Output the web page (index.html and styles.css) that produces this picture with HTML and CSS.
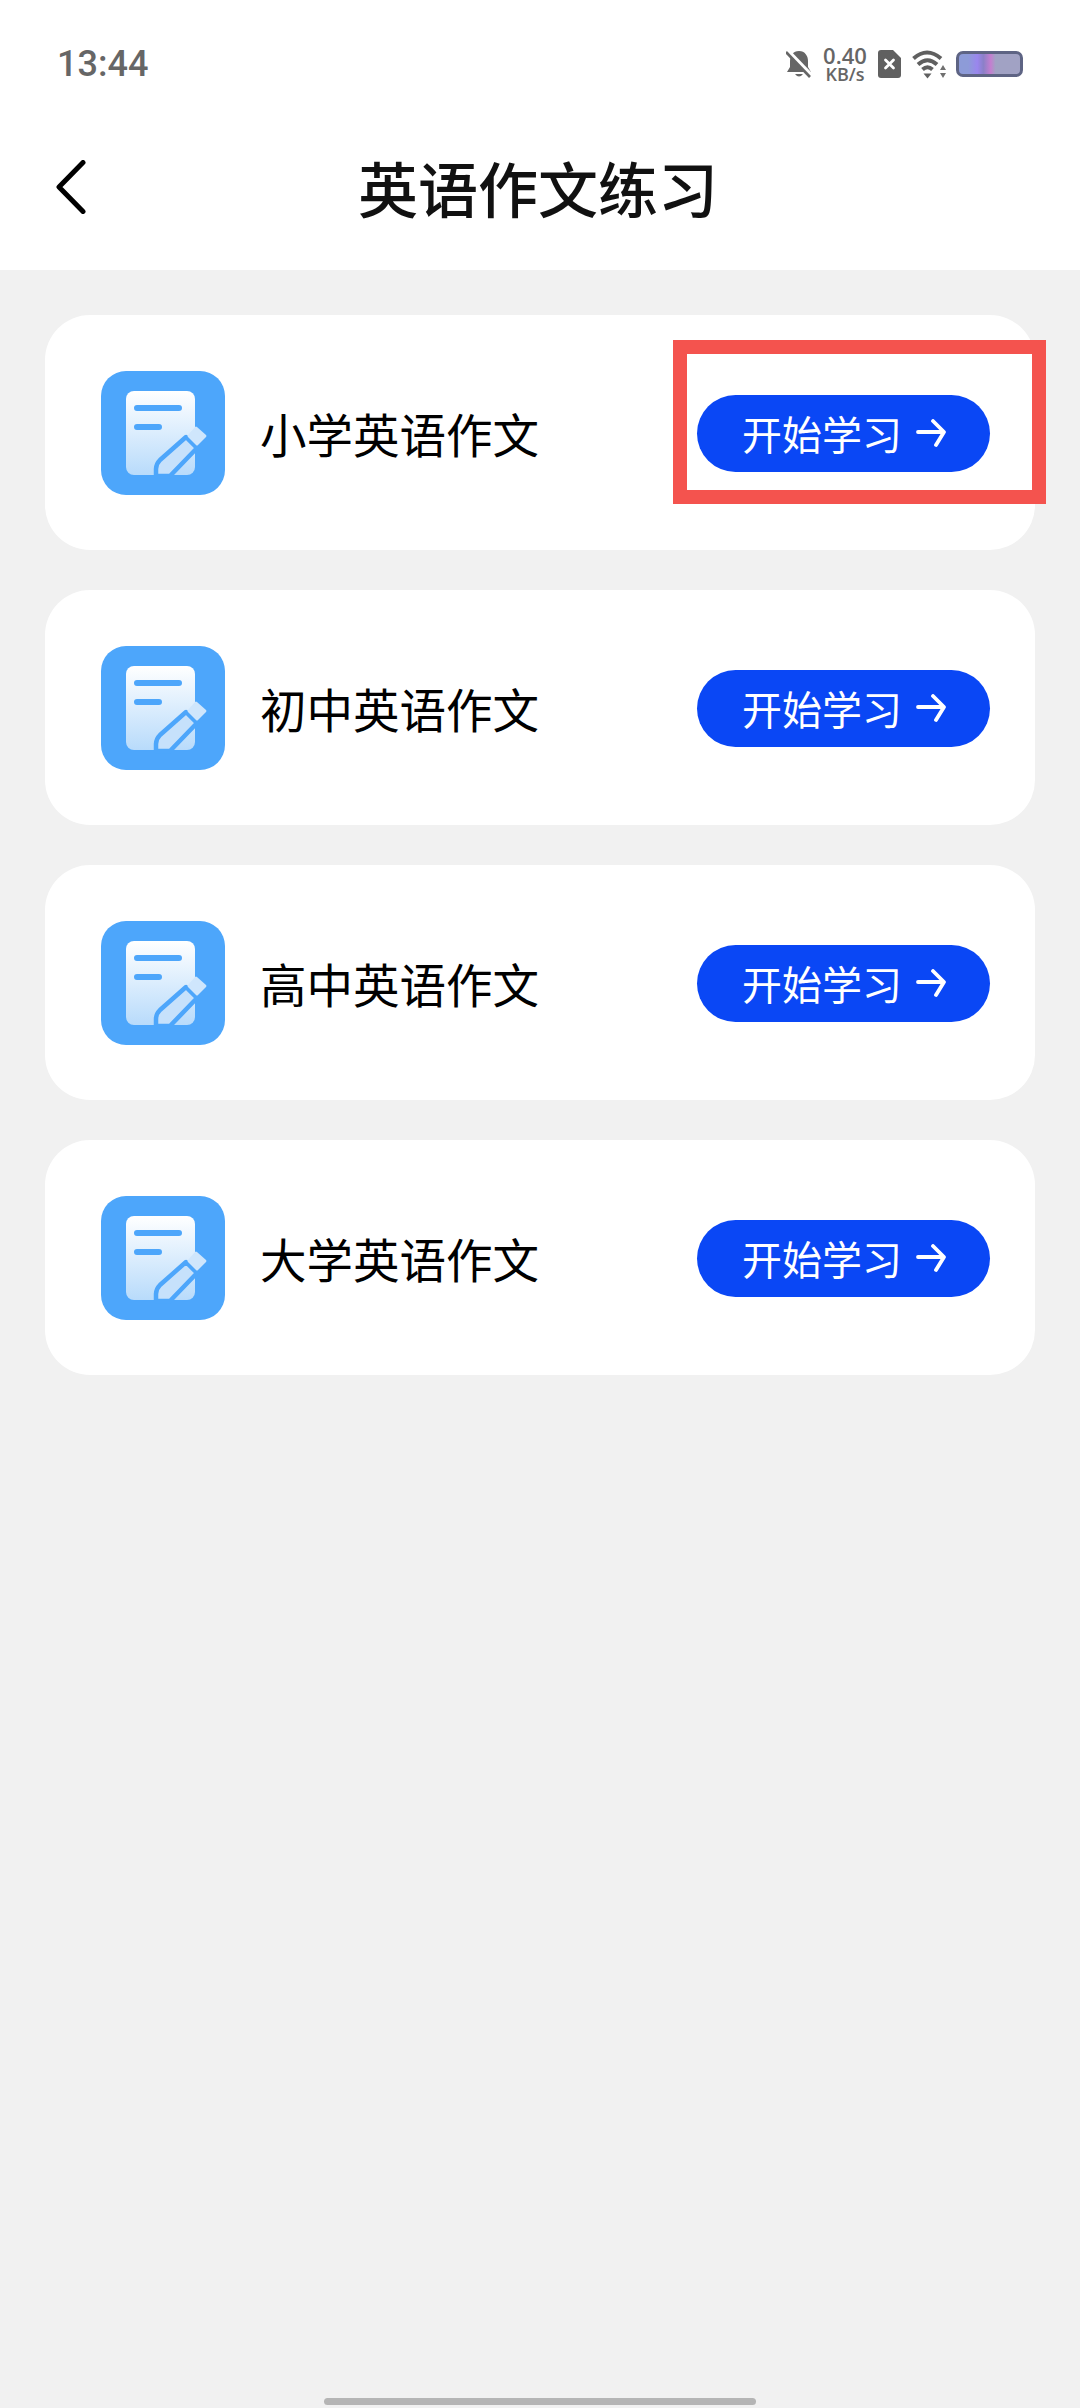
FILE: index.html
```html
<!DOCTYPE html>
<html lang="zh">
<head>
<meta charset="utf-8">
<title>英语作文练习</title>
<link rel="stylesheet" href="styles.css">
</head>
<body>
<svg class="defs" width="0" height="0" aria-hidden="true">
  <defs>
    <linearGradient id="docfill" x1="0" y1="0" x2="0" y2="1">
      <stop offset="0" stop-color="#ffffff"/>
      <stop offset="1" stop-color="#b8dbfb"/>
    </linearGradient>
    <symbol id="note" viewBox="0 0 124 124">
      <rect width="124" height="124" rx="25" fill="#4da6fb"/>
      <rect x="25" y="20" width="69" height="84" rx="8" fill="url(#docfill)"/>
      <path d="M36 37H78M36 56H58" stroke="#4da6fb" stroke-width="6" stroke-linecap="round" fill="none"/>
      <path d="M55 105V98Q55 93 59 89L85 66L96 77L69 105Z" fill="#c6e1fb" stroke="#4da6fb" stroke-width="4.500" stroke-linejoin="round"/>
      <path d="M96 56L105 64Q106 65 105 66L97 74Q96 75 95 74L87 66Q86 65 87 64L94 56Q95 55 96 56Z" fill="#cfe6fc"/>
    </symbol>
    <symbol id="go" viewBox="0 0 30 28">
      <path d="M2 13H27M17 2L28 13L20 26" fill="none" stroke="#fff" stroke-width="3.800" stroke-linecap="round" stroke-linejoin="round"/>
    </symbol>
  </defs>
</svg>

<div class="page">
  <header class="top">
    <div class="status">
      <span class="time">13:44</span>
      <div class="status-icons">
        <svg class="ic-bell" viewBox="0 0 26 28">
          <path d="M13 1C7 1 4 6 4 11V17L1 22H25L22 17V11C22 6 19 1 13 1ZM9 24Q13 29 17 24Z" fill="#666"/>
          <path d="M2 1L26 26" stroke="#fff" stroke-width="4"/>
          <path d="M0 2L24 27" stroke="#666" stroke-width="2.600"/>
        </svg>
        <div class="speed">0.40<br>KB/s</div>
        <svg class="ic-sim" viewBox="0 0 23 28">
          <path d="M3 0H15L23 8V25Q23 28 20 28H3Q0 28 0 25V3Q0 0 3 0Z" fill="#606060"/>
          <path d="M7.500 10L15.500 18M15.500 10L7.500 18" stroke="#fff" stroke-width="2.800" stroke-linecap="round"/>
        </svg>
        <svg class="ic-wifi" viewBox="0 0 35 30">
          <path d="M1.500 9.500Q15 -2.500 29 9.500M6 15.500Q15.500 7 25 15.500M10.500 20.500Q15.500 16 20.500 20.500" stroke="#606060" stroke-width="4" fill="none"/>
          <path d="M11.500 24.500H19.500L15.500 29.500Z" fill="#606060"/>
          <path d="M31 16L34 21H28ZM28 24H34L31 29Z" fill="#707070"/>
        </svg>
        <div class="battery"></div>
      </div>
    </div>
    <nav class="nav">
      <svg class="back" viewBox="0 0 30 54">
        <path d="M27 2.500L3 27L27 51.500" fill="none" stroke="#000" stroke-width="5" stroke-linecap="round" stroke-linejoin="round"/>
      </svg>
      <h1 class="title">英语作文练习</h1>
    </nav>
  </header>

  <main class="list">
    <section class="card">
      <svg class="card-icon"><use href="#note"/></svg>
      <span class="card-name">小学英语作文</span>
      <div class="btn-wrap">
        <button class="start"><span>开始学习</span><svg class="arrow"><use href="#go"/></svg></button>
        <div class="highlight"></div>
      </div>
    </section>
    <section class="card">
      <svg class="card-icon"><use href="#note"/></svg>
      <span class="card-name">初中英语作文</span>
      <div class="btn-wrap">
        <button class="start"><span>开始学习</span><svg class="arrow"><use href="#go"/></svg></button>
      </div>
    </section>
    <section class="card">
      <svg class="card-icon"><use href="#note"/></svg>
      <span class="card-name">高中英语作文</span>
      <div class="btn-wrap">
        <button class="start"><span>开始学习</span><svg class="arrow"><use href="#go"/></svg></button>
      </div>
    </section>
    <section class="card">
      <svg class="card-icon"><use href="#note"/></svg>
      <span class="card-name">大学英语作文</span>
      <div class="btn-wrap">
        <button class="start"><span>开始学习</span><svg class="arrow"><use href="#go"/></svg></button>
      </div>
    </section>
  </main>

  <div class="home-bar"></div>
</div>
</body>
</html>
```

FILE: styles.css
```css
* {
  box-sizing: border-box;
}

html,
body {
  margin: 0;
  padding: 0;
  background: #f1f1f1;
}

.defs {
  position: absolute;
}

.page {
  width: 1080px;
  height: 2408px;
  display: flex;
  flex-direction: column;
  font-family: "Noto Sans CJK SC", "Noto Sans", sans-serif;
  overflow: hidden;
}

.top {
  height: 270px;
  background: #fff;
  flex: none;
}

.status {
  height: 110px;
  padding: 18px 57px 0 57px;
  display: flex;
  align-items: center;
  justify-content: space-between;
}

.time {
  font-family: Roboto, sans-serif;
  font-weight: 500;
  font-size: 36px;
  color: #666;
}

.status-icons {
  display: flex;
  align-items: center;
}

.ic-bell {
  width: 26px;
  height: 28px;
}

.speed {
  width: 50px;
  margin-left: 8px;
  font-family: "Open Sans", sans-serif;
  font-weight: 600;
  font-size: 18px;
  line-height: 19px;
  text-align: center;
  color: #666;
}

.speed::first-line {
  font-size: 22px;
  line-height: 20px;
}

.ic-sim {
  width: 23px;
  height: 28px;
  margin-left: 8px;
}

.ic-wifi {
  width: 35px;
  height: 30px;
  margin-left: 11px;
}

.battery {
  width: 67px;
  height: 26px;
  margin-left: 9px;
  border: 3px solid #5e6484;
  border-radius: 7px;
  background: linear-gradient(90deg, #8d9bd8 0%, #8d9bd8 15%, #9a86ee 30%, #8b80c8 40%, #c47fd0 52%, #a1a2c4 60%, #a1a2c4 100%);
}

.nav {
  height: 160px;
  padding: 0 0 6px 56px;
  display: flex;
  align-items: center;
}

.back {
  width: 30px;
  height: 54px;
}

.title {
  margin: 0 0 0 272px;
  font-size: 60px;
  font-weight: 500;
  line-height: 72px;
  color: #111;
}

.list {
  padding: 45px 45px 0;
  display: flex;
  flex-direction: column;
  gap: 40px;
}

.card {
  height: 235px;
  background: #fff;
  border-radius: 45px;
  padding: 0 45px 0 56px;
  display: flex;
  align-items: center;
}

.card-icon {
  width: 124px;
  height: 124px;
  flex: none;
}

.card-name {
  margin-left: 35px;
  font-size: 46.500px;
  font-weight: 400;
  line-height: 60px;
  color: #000;
}

.btn-wrap {
  margin: 1px 0 0 auto;
  position: relative;
}

.start {
  width: 293px;
  height: 77px;
  border: 0;
  border-radius: 39px;
  background: #0a47f5;
  color: #fff;
  font-family: inherit;
  font-size: 40px;
  padding: 0 0 0 45px;
  display: flex;
  align-items: center;
  gap: 14px;
}

.arrow {
  width: 30px;
  height: 28px;
  flex: none;
}

.highlight {
  position: absolute;
  left: -24px;
  top: -55px;
  width: 373px;
  height: 164px;
  border: 14px solid #f4534e;
}

.home-bar {
  position: absolute;
  left: 324px;
  top: 2398px;
  width: 432px;
  height: 7px;
  border-radius: 3.500px;
  background: #b5b5b5;
}
```
